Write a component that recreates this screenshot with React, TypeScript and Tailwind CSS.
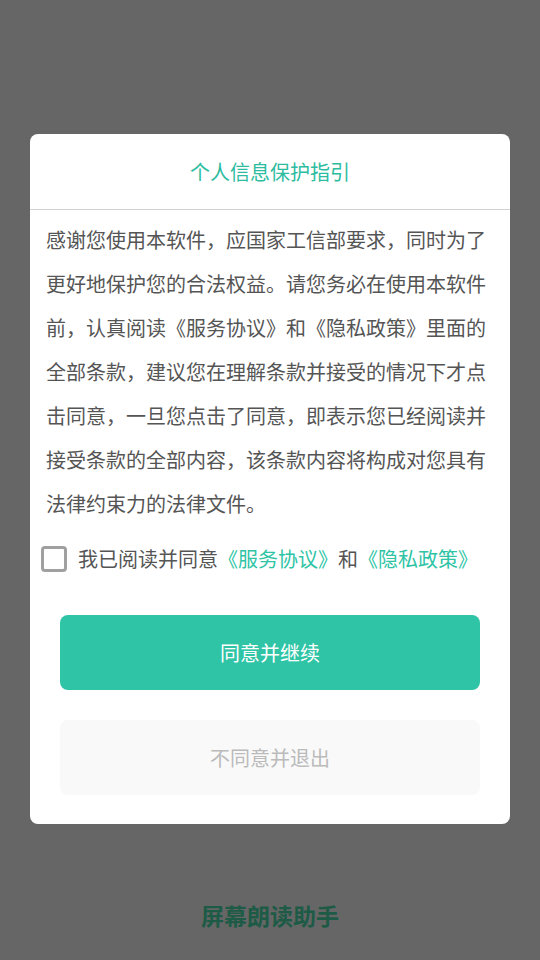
export default function App() {
  const font = { fontFamily: '"Noto Sans CJK SC", "Noto Sans", sans-serif' };
  return (
    <div className="w-[540px] h-[960px] bg-[#666666] flex flex-col items-center overflow-hidden" style={font}>
      <div className="mt-[134px] w-[480px] bg-white rounded-[8px] flex flex-col">
        <div className="h-[75px] flex items-center justify-center text-[20px] text-[#2dbc9f]">
          个人信息保护指引
        </div>
        <div className="h-px bg-[#d0d0d0]" />
        <div className="px-[16px] pt-[8px] text-[20px] leading-[44px] text-[#555555]">
          感谢您使用本软件，应国家工信部要求，同时为了更好地保护您的合法权益。请您务必在使用本软件前，认真阅读《服务协议》和《隐私政策》里面的全部条款，建议您在理解条款并接受的情况下才点击同意，一旦您点击了同意，即表示您已经阅读并接受条款的全部内容，该条款内容将构成对您具有法律约束力的法律文件。
        </div>
        <div className="mt-[11px] h-[44px] flex items-center pl-[11px]">
          <div className="w-[26px] h-[26px] border-[3px] border-[#a0a0a0] rounded-[4px] shrink-0" />
          <div className="ml-[11px] text-[20px] text-[#555555] whitespace-nowrap">
            我已阅读并同意<span className="text-[#2ec4a5]">《服务协议》</span>和<span className="text-[#2ec4a5]">《隐私政策》</span>
          </div>
        </div>
        <div className="mt-[34px] mx-[30px] h-[75px] rounded-[8px] bg-[#2ec4a5] flex items-center justify-center text-[20px] text-white">
          同意并继续
        </div>
        <div className="mt-[30px] mx-[30px] mb-[29px] h-[75px] rounded-[8px] bg-[#f9f9f9] flex items-center justify-center text-[20px] text-[#bbbbbb]">
          不同意并退出
        </div>
      </div>
      <div className="mt-[76px] text-[23px] leading-[30px] font-bold text-[#1d5b46]">
        屏幕朗读助手
      </div>
    </div>
  );
}
